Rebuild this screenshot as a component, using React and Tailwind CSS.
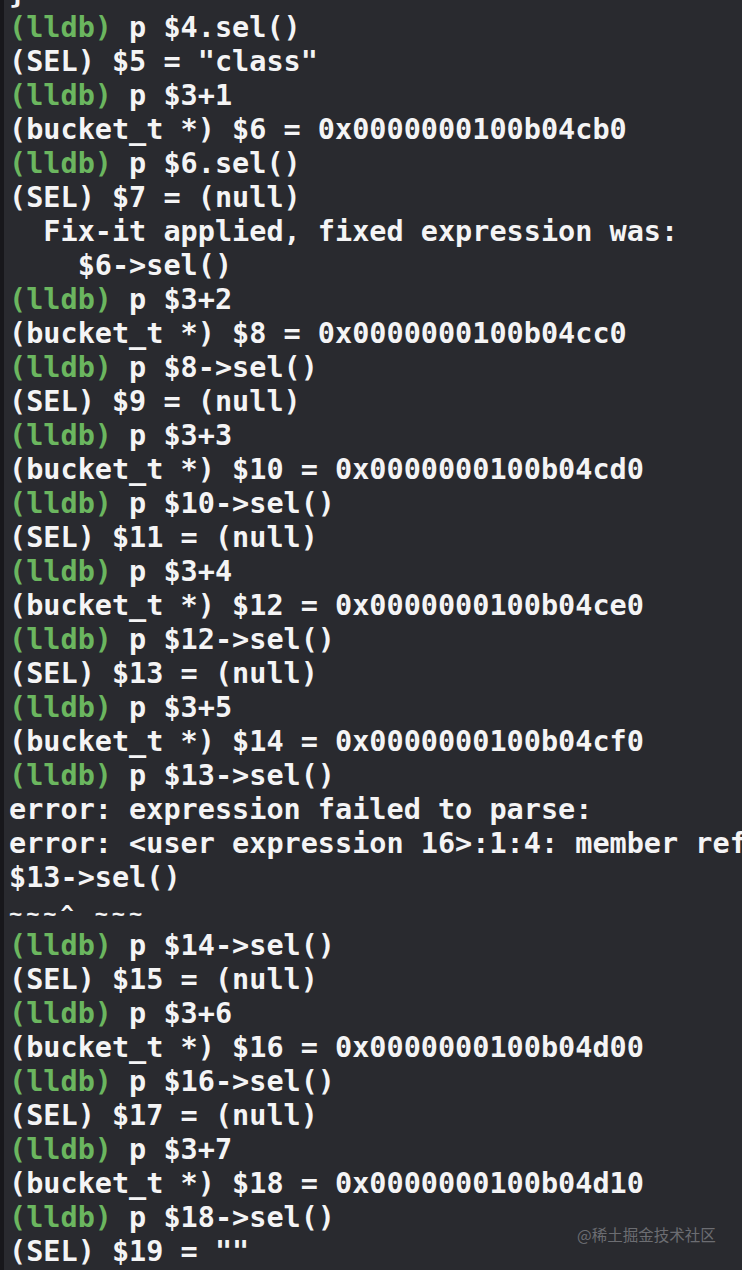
import React from "react";

const G = "(lldb)";
const lines = [
  ["w", "}"],
  ["p", " p $4.sel()"],
  ["w", '(SEL) $5 = "class"'],
  ["p", " p $3+1"],
  ["w", "(bucket_t *) $6 = 0x0000000100b04cb0"],
  ["p", " p $6.sel()"],
  ["w", "(SEL) $7 = (null)"],
  ["w", "  Fix-it applied, fixed expression was: "],
  ["w", "    $6->sel()"],
  ["p", " p $3+2"],
  ["w", "(bucket_t *) $8 = 0x0000000100b04cc0"],
  ["p", " p $8->sel()"],
  ["w", "(SEL) $9 = (null)"],
  ["p", " p $3+3"],
  ["w", "(bucket_t *) $10 = 0x0000000100b04cd0"],
  ["p", " p $10->sel()"],
  ["w", "(SEL) $11 = (null)"],
  ["p", " p $3+4"],
  ["w", "(bucket_t *) $12 = 0x0000000100b04ce0"],
  ["p", " p $12->sel()"],
  ["w", "(SEL) $13 = (null)"],
  ["p", " p $3+5"],
  ["w", "(bucket_t *) $14 = 0x0000000100b04cf0"],
  ["p", " p $13->sel()"],
  ["e", "error: expression failed to parse:"],
  ["e", "error: <user expression 16>:1:4: member reference type 'bucket_t' is not a pointer"],
  ["e", "$13->sel()"],
  ["t", "~~~^ ~~~"],
  ["p", " p $14->sel()"],
  ["w", "(SEL) $15 = (null)"],
  ["p", " p $3+6"],
  ["w", "(bucket_t *) $16 = 0x0000000100b04d00"],
  ["p", " p $16->sel()"],
  ["w", "(SEL) $17 = (null)"],
  ["p", " p $3+7"],
  ["w", "(bucket_t *) $18 = 0x0000000100b04d10"],
  ["p", " p $18->sel()"],
  ["w", '(SEL) $19 = ""'],
];

export default function App() {
  return (
    <div className="relative w-[742px] h-[1270px] overflow-hidden bg-[#292a2f] flex">
      <div className="w-[4px] shrink-0 bg-[#17171b]" />
      <div
        className="flex-1 min-w-0 pl-[5px] mt-[-23px] text-[#f4f4f5] font-bold text-[28.5px] leading-[34px] whitespace-pre overflow-hidden"
        style={{ fontFamily: '"DejaVu Sans Mono", "Liberation Mono", monospace' }}
      >
        {lines.map(([k, t], i) => (
          <div key={i} className="h-[34px]">
            {k === "p" ? (
              <>
                <span className="text-[#6bb65f]">{G}</span>
                {t}
              </>
            ) : k === "t" ? (
              <span className="text-[22px]">{t.split("").map((c, j) => <span key={j} className="inline-block w-[17.15px]">{c}</span>)}</span>
            ) : (
              t
            )}
          </div>
        ))}
      </div>
      <div
        className="absolute left-[577px] top-[1224px] text-[15.5px] leading-[20px] text-[#6c6d72]"
        style={{ fontFamily: '"Noto Sans CJK SC", "Noto Sans", sans-serif' }}
      >
        @稀土掘金技术社区
      </div>
    </div>
  );
}
